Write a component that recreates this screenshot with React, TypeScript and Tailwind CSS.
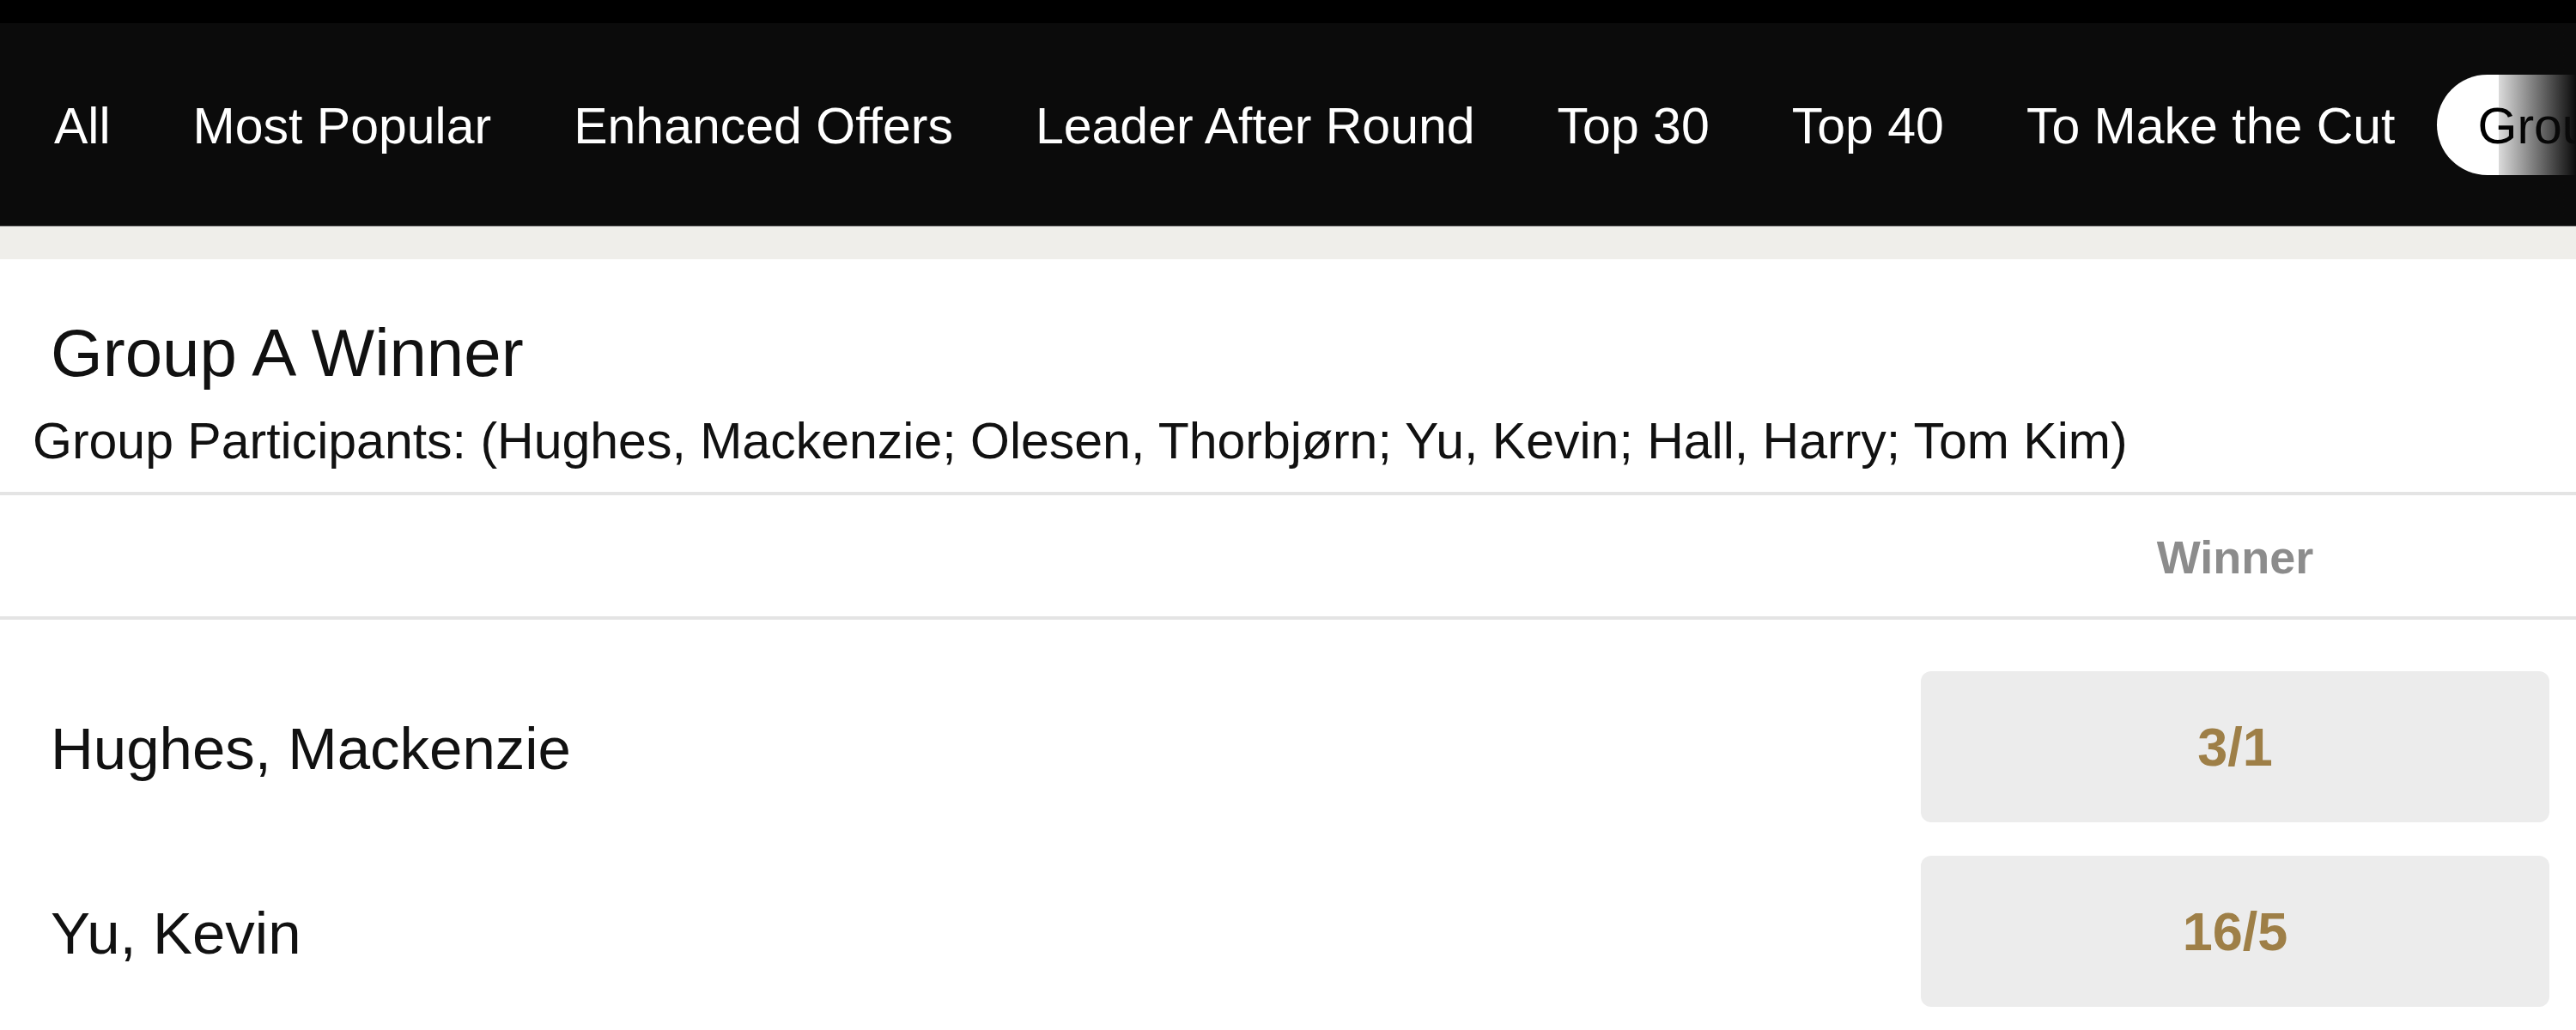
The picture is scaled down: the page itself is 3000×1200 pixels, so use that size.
import React from 'react';

const tabs = ['All', 'Most Popular', 'Enhanced Offers', 'Leader After Round', 'Top 30', 'Top 40', 'To Make the Cut', 'Group Betting'];

const selections = [
  { name: 'Hughes, Mackenzie', odds: '3/1' },
  { name: 'Yu, Kevin', odds: '16/5' },
];

export default function App() {
  const active = 'Group Betting';

  return (
    <div className="min-h-[1200px] w-[3000px] overflow-hidden bg-white font-['Liberation_Sans',Arial,sans-serif] text-[#111]">
      {/* top strip */}
      <div className="h-[27px] bg-black" />

      {/* market tabs */}
      <div className="relative h-[237px] border-b border-[#8f8f8f] bg-[#0b0b0b]">
        <div className="flex h-full flex-nowrap items-center pl-[15px]">
          {tabs.map((tab) => (
            <div
              key={tab}
              className={`flex h-[117px] shrink-0 items-center whitespace-nowrap rounded-full px-[48px] pt-[5px] text-[59px] leading-none ${
                tab === active ? 'bg-white text-black' : 'text-white'
              }`}
            >
              {tab}
            </div>
          ))}
        </div>
        <div className="absolute right-0 top-0 bottom-0 w-[90px] bg-gradient-to-r from-[#0b0b0b]/15 to-[#0b0b0b]" />
      </div>
      <div className="h-[38px] bg-[#efeeea]" />

      {/* market header */}
      <div className="pt-[70px]">
        <h2 className="pl-[59px] text-[78px] leading-none">Group A Winner</h2>
        <p className="mt-[35px] pl-[38px] text-[59px] leading-none">
          Group Participants: (Hughes, Mackenzie; Olesen, Thorbjørn; Yu, Kevin; Hall, Harry; Tom Kim)
        </p>
      </div>

      <div className="mt-[29px] h-[4px] bg-[#e4e4e4]" />
      <div className="flex h-[141px] items-center justify-end pr-[31px] pt-[4px]">
        <div className="w-[732px] text-center text-[54px] font-bold text-[#8c8c8c]">Winner</div>
      </div>
      <div className="h-[4px] bg-[#e4e4e4]" />

      {/* selections */}
      <div className="flex flex-col gap-[39px] pt-[60px]">
        {selections.map((s) => (
          <div key={s.name} className="flex items-center justify-between pl-[59px] pr-[31px]">
            <span className="pt-[4px] text-[69px] leading-none">{s.name}</span>
            <button className="flex h-[176px] w-[732px] items-center justify-center rounded-[12px] bg-[#ececec] text-[63px] font-bold text-[#9e7f47]">
              {s.odds}
            </button>
          </div>
        ))}
      </div>
    </div>
  );
}
